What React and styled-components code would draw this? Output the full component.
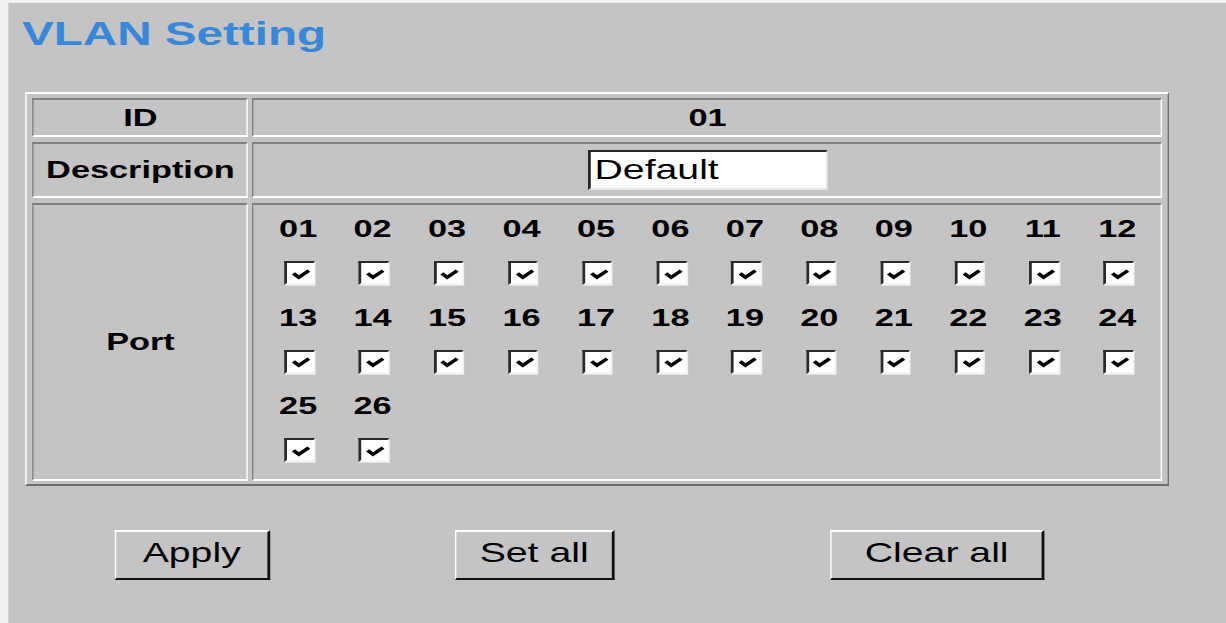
import React from 'react';
import styled, { createGlobalStyle } from 'styled-components';

// the reference is a stretched capture: everything is drawn at its natural
// size and widened by SX at the top
const SX = 1.4;

const ports = Array.from({ length: 26 }, (_, i) => String(i + 1).padStart(2, '0'));
const rows = [ports.slice(0, 12), ports.slice(12, 24), ports.slice(24)];

const GlobalStyle = createGlobalStyle`
  html, body {
    margin: 0;
    padding: 0;
    background: #f1f1f1;
    overflow: hidden;
  }
  body {
    font-family: "Liberation Sans", Arial, sans-serif;
  }
`;

const Stage = styled.div`
  width: ${1226 / SX}px;
  height: 623px;
  box-sizing: border-box;
  padding: 3px 0 0 ${8 / SX}px;
  transform: scaleX(${SX});
  transform-origin: 0 0;
`;

const Panel = styled.div`
  height: 100%;
  box-sizing: border-box;
  background: #c4c4c4;
  padding-top: 13px;
`;

const Title = styled.h1`
  margin: 0 0 0 10px;
  font-size: 34px;
  line-height: 34px;
  font-weight: bold;
  color: #3887d8;
`;

const Table = styled.div`
  display: grid;
  grid-template-columns: 154.3px 650px;
  grid-template-rows: 39px 56px 278px;
  column-gap: 2.9px;
  row-gap: 5px;
  width: max-content;
  margin: 42px 0 0 12.2px;
  padding: 4px 3.6px 3px 4.3px;
  border-style: solid;
  border-width: 2px 1.5px;
  border-color: #ffffff #6e6e6e #6e6e6e #ffffff;
`;

const Cell = styled.div`
  box-sizing: border-box;
  display: flex;
  align-items: ${p => (p.$top ? 'flex-start' : 'center')};
  justify-content: ${p => (p.$top ? 'flex-start' : 'center')};
  border-style: solid;
  border-width: 2px 1.5px;
  border-color: #808080 #ffffff #ffffff #808080;
  font-size: 24.5px;
  font-weight: bold;
  color: #000;
`;

const DescInput = styled.input`
  box-sizing: border-box;
  width: 171.4px;
  height: 40px;
  margin: 0;
  padding: 0 0 0 3px;
  background: #fff;
  border-style: solid;
  border-width: 2px 1.5px 2px 2px;
  border-color: #262626 #e6e6e6 #e6e6e6 #262626;
  font-family: "Liberation Sans", Arial, sans-serif;
  font-size: 28px;
  color: #000;
  outline: none;
`;

const PortGrid = styled.div`
  display: flex;
  flex-direction: column;
  padding: 2px 0 0 5px;
`;

const PortRow = styled.div`
  display: flex;
`;

const PortItem = styled.div`
  width: 53.2px;
  display: flex;
  flex-direction: column;
  align-items: center;
`;

const PortNum = styled.div`
  height: 44px;
  line-height: 44px;
  font-size: 24.5px;
  font-weight: bold;
`;

const BoxLine = styled.div`
  height: 44.5px;
  display: flex;
  align-items: center;
  padding-left: 2px;
`;

const Box = styled.div`
  box-sizing: border-box;
  width: 21.5px;
  height: 24px;
  display: flex;
  align-items: center;
  justify-content: center;
  padding: 2px 0 0 1px;
  background: #fff;
  border-style: solid;
  border-width: 2.5px 1.5px 2px 2.2px;
  border-color: #2a2a2a #f4f4f4 #f4f4f4 #2a2a2a;
  box-shadow: 0.6px 1px 0 #e2e2e2;
`;

const ButtonRow = styled.div`
  display: flex;
  margin-top: 44px;
  padding-left: 76.4px;
`;

const Button = styled.button`
  box-sizing: border-box;
  width: ${p => p.$w}px;
  height: 50px;
  margin: 0 0 0 ${p => p.$ml || 0}px;
  padding: 0 0 4px;
  background: #c4c4c4;
  border-style: solid;
  border-width: 2px 2px 2.5px 1.5px;
  border-color: #ffffff #111111 #111111 #ffffff;
  font-family: "Liberation Sans", Arial, sans-serif;
  font-size: 28px;
  color: #000;
`;

const Check = () => (
  <svg width="14" height="11" viewBox="0 0 14 11">
    <polyline points="1.6,4.4 5.4,8.4 12.6,1.6" fill="none" stroke="#000" strokeWidth="3" />
  </svg>
);

const App = () => (
  <>
    <GlobalStyle />
    <Stage>
      <Panel>
        <Title>VLAN Setting</Title>
        <Table>
          <Cell>ID</Cell>
          <Cell>01</Cell>
          <Cell>Description</Cell>
          <Cell>
            <DescInput defaultValue="Default" />
          </Cell>
          <Cell>Port</Cell>
          <Cell $top>
            <PortGrid>
              {rows.map((row, r) => (
                <PortRow key={r}>
                  {row.map(port => (
                    <PortItem key={port}>
                      <PortNum>{port}</PortNum>
                      <BoxLine>
                        <Box><Check /></Box>
                      </BoxLine>
                    </PortItem>
                  ))}
                </PortRow>
              ))}
            </PortGrid>
          </Cell>
        </Table>
        <ButtonRow>
          <Button $w={110.7}>Apply</Button>
          <Button $w={114.3} $ml={132.1}>Set all</Button>
          <Button $w={153.6} $ml={153.6}>Clear all</Button>
        </ButtonRow>
      </Panel>
    </Stage>
  </>
);

export default App;
